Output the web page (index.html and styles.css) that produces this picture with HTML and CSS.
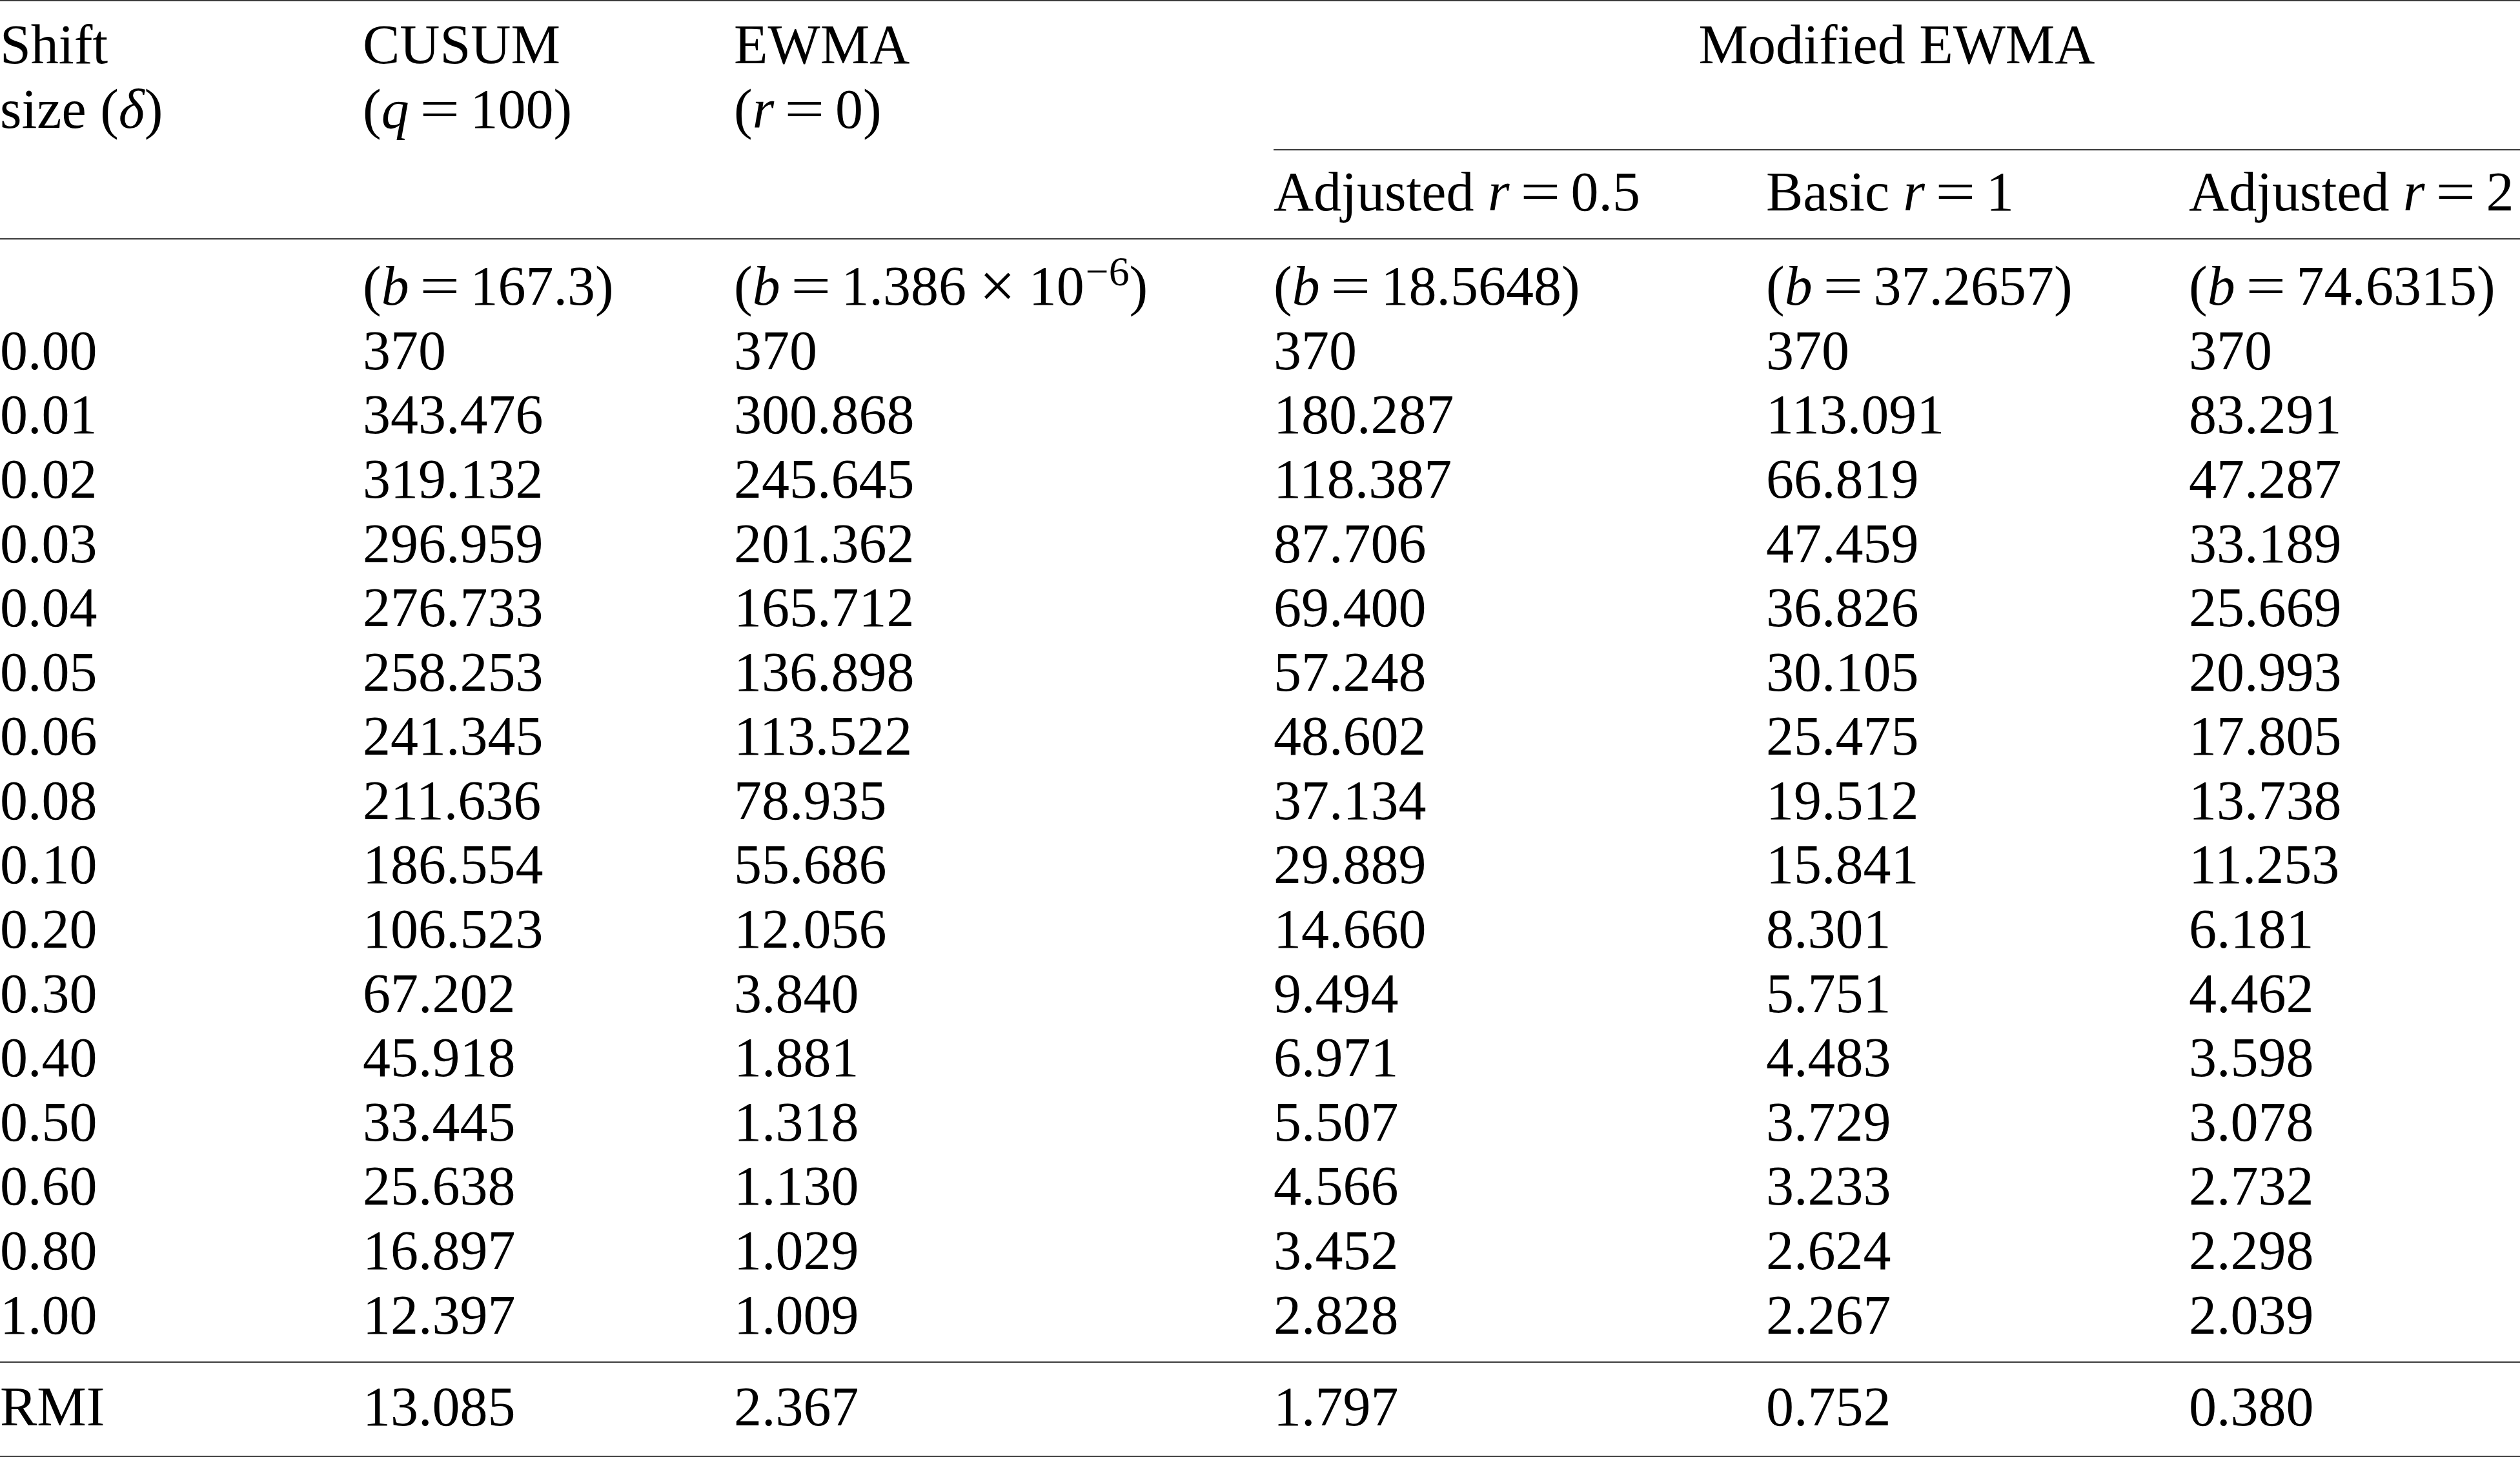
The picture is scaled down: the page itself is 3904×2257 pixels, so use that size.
FILE: index.html
```html
<!DOCTYPE html>
<html lang="en">
<head>
<meta charset="utf-8">
<title>ARL comparison table</title>
<link rel="stylesheet" href="styles.css">
</head>
<body>
<div class="table">
  <div class="head">
    <div class="hcell span2">Shift<br>size (<i>δ</i>)</div>
    <div class="hcell span2">CUSUM<br>(<i>q</i><span class="eq">=</span>100)</div>
    <div class="hcell span2">EWMA<br>(<i>r</i><span class="eq">=</span>0)</div>
    <div class="hcell group">Modified EWMA</div>
    <div class="hcell sub">Adjusted <i>r</i><span class="eq">=</span>0.5</div>
    <div class="hcell sub">Basic <i>r</i><span class="eq">=</span>1</div>
    <div class="hcell sub">Adjusted <i>r</i><span class="eq">=</span>2</div>
  </div>
  <div class="body">
    <div class="row"><div></div><div>(<i>b</i><span class="eq">=</span>167.3)</div><div>(<i>b</i><span class="eq">=</span>1.386<span class="times">×</span>10<sup>−6</sup>)</div><div>(<i>b</i><span class="eq">=</span>18.5648)</div><div>(<i>b</i><span class="eq">=</span>37.2657)</div><div>(<i>b</i><span class="eq">=</span>74.6315)</div></div>
    <div class="row"><div>0.00</div><div>370</div><div>370</div><div>370</div><div>370</div><div>370</div></div>
    <div class="row"><div>0.01</div><div>343.476</div><div>300.868</div><div>180.287</div><div>113.091</div><div>83.291</div></div>
    <div class="row"><div>0.02</div><div>319.132</div><div>245.645</div><div>118.387</div><div>66.819</div><div>47.287</div></div>
    <div class="row"><div>0.03</div><div>296.959</div><div>201.362</div><div>87.706</div><div>47.459</div><div>33.189</div></div>
    <div class="row"><div>0.04</div><div>276.733</div><div>165.712</div><div>69.400</div><div>36.826</div><div>25.669</div></div>
    <div class="row"><div>0.05</div><div>258.253</div><div>136.898</div><div>57.248</div><div>30.105</div><div>20.993</div></div>
    <div class="row"><div>0.06</div><div>241.345</div><div>113.522</div><div>48.602</div><div>25.475</div><div>17.805</div></div>
    <div class="row"><div>0.08</div><div>211.636</div><div>78.935</div><div>37.134</div><div>19.512</div><div>13.738</div></div>
    <div class="row"><div>0.10</div><div>186.554</div><div>55.686</div><div>29.889</div><div>15.841</div><div>11.253</div></div>
    <div class="row"><div>0.20</div><div>106.523</div><div>12.056</div><div>14.660</div><div>8.301</div><div>6.181</div></div>
    <div class="row"><div>0.30</div><div>67.202</div><div>3.840</div><div>9.494</div><div>5.751</div><div>4.462</div></div>
    <div class="row"><div>0.40</div><div>45.918</div><div>1.881</div><div>6.971</div><div>4.483</div><div>3.598</div></div>
    <div class="row"><div>0.50</div><div>33.445</div><div>1.318</div><div>5.507</div><div>3.729</div><div>3.078</div></div>
    <div class="row"><div>0.60</div><div>25.638</div><div>1.130</div><div>4.566</div><div>3.233</div><div>2.732</div></div>
    <div class="row"><div>0.80</div><div>16.897</div><div>1.029</div><div>3.452</div><div>2.624</div><div>2.298</div></div>
    <div class="row"><div>1.00</div><div>12.397</div><div>1.009</div><div>2.828</div><div>2.267</div><div>2.039</div></div>
  </div>
  <div class="foot">
    <div class="row"><div>RMI</div><div>13.085</div><div>2.367</div><div>1.797</div><div>0.752</div><div>0.380</div></div>
  </div>
</div>
</body>
</html>
```

FILE: styles.css
```css
html, body {
  margin: 0;
  padding: 0;
  background: #ffffff;
  overflow: hidden;
}

.table {
  --cols: 562px 575px 836px 763px 655px 513px;
  --lh: 99.6px;
  --rule: 2px solid #3a3a3a;
  width: 3904px;
  font-family: "Liberation Serif", "Times New Roman", serif;
  font-size: 86px;
  line-height: var(--lh);
  color: #000000;
}

.table i {
  font-style: italic;
}

.eq {
  display: inline-block;
  margin: 0 0.27em;
  transform: scaleX(1.28);
}

.times {
  display: inline-block;
  margin: 0 0.28em;
  transform: scale(1.15);
}

sup {
  font-size: 0.74em;
  line-height: 0;
  vertical-align: 30px;
  margin-left: 2px;
}

.head {
  display: grid;
  grid-template-columns: var(--cols);
  border-top: var(--rule);
  border-bottom: var(--rule);
}

.hcell {
  white-space: nowrap;
}

.span2 {
  grid-row: 1 / span 2;
  padding-top: 18.2px;
}

.group {
  grid-column: 4 / span 3;
  grid-row: 1;
  text-align: center;
  padding: 18.2px 0 111.2px;
  border-bottom: var(--rule);
}

.sub {
  grid-row: 2;
  padding: 15.2px 0 21.2px;
}

.body {
  padding: 23.2px 0 21.6px;
  border-bottom: var(--rule);
}

.foot {
  padding: 19.2px 0 25.2px;
  border-bottom: var(--rule);
}

.row {
  display: grid;
  grid-template-columns: var(--cols);
  white-space: nowrap;
}
```
